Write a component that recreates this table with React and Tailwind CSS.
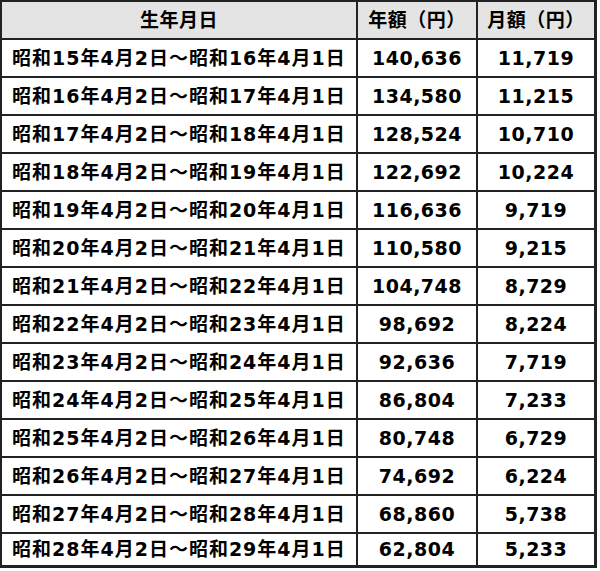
const rows = [
  ["昭和15年4月2日～昭和16年4月1日", "140,636", "11,719"],
  ["昭和16年4月2日～昭和17年4月1日", "134,580", "11,215"],
  ["昭和17年4月2日～昭和18年4月1日", "128,524", "10,710"],
  ["昭和18年4月2日～昭和19年4月1日", "122,692", "10,224"],
  ["昭和19年4月2日～昭和20年4月1日", "116,636", "9,719"],
  ["昭和20年4月2日～昭和21年4月1日", "110,580", "9,215"],
  ["昭和21年4月2日～昭和22年4月1日", "104,748", "8,729"],
  ["昭和22年4月2日～昭和23年4月1日", "98,692", "8,224"],
  ["昭和23年4月2日～昭和24年4月1日", "92,636", "7,719"],
  ["昭和24年4月2日～昭和25年4月1日", "86,804", "7,233"],
  ["昭和25年4月2日～昭和26年4月1日", "80,748", "6,729"],
  ["昭和26年4月2日～昭和27年4月1日", "74,692", "6,224"],
  ["昭和27年4月2日～昭和28年4月1日", "68,860", "5,738"],
  ["昭和28年4月2日～昭和29年4月1日", "62,804", "5,233"],
];

export default function App() {
  return (
    <div className="w-[600px] h-[571px] bg-white overflow-hidden">
      <div
        className="w-[597px] border-l-2 border-t-2 border-r-[3px] border-b-[3px] border-[#222] text-[19px] font-bold text-black"
        style={{ fontFamily: '"DejaVu Sans", "Noto Sans CJK JP", sans-serif' }}
      >
        <div className="grid grid-cols-[356px_120px_116px] h-[38px] border-b-2 border-[#222] bg-[#e4e4e4] tracking-[0.5px]">
          <div className="flex items-center justify-center border-r-2 border-[#222]">生年月日</div>
          <div className="flex items-center justify-center border-r-2 border-[#222]">年額（円）</div>
          <div className="flex items-center justify-center">月額（円）</div>
        </div>
        {rows.map((r, i) => (
          <div
            key={i}
            className={
              i === rows.length - 1
                ? "grid grid-cols-[356px_120px_116px] h-[31px]"
                : "grid grid-cols-[356px_120px_116px] h-[38px] border-b-2 border-[#222]"
            }
          >
            <div className="flex items-center pl-[10px] border-r-2 border-[#222] whitespace-nowrap tracking-[1px]">{r[0]}</div>
            <div className="flex items-center justify-center border-r-2 border-[#222] tracking-[0.5px]">{r[1]}</div>
            <div className="flex items-center justify-center tracking-[0.5px]">{r[2]}</div>
          </div>
        ))}
      </div>
    </div>
  );
}
